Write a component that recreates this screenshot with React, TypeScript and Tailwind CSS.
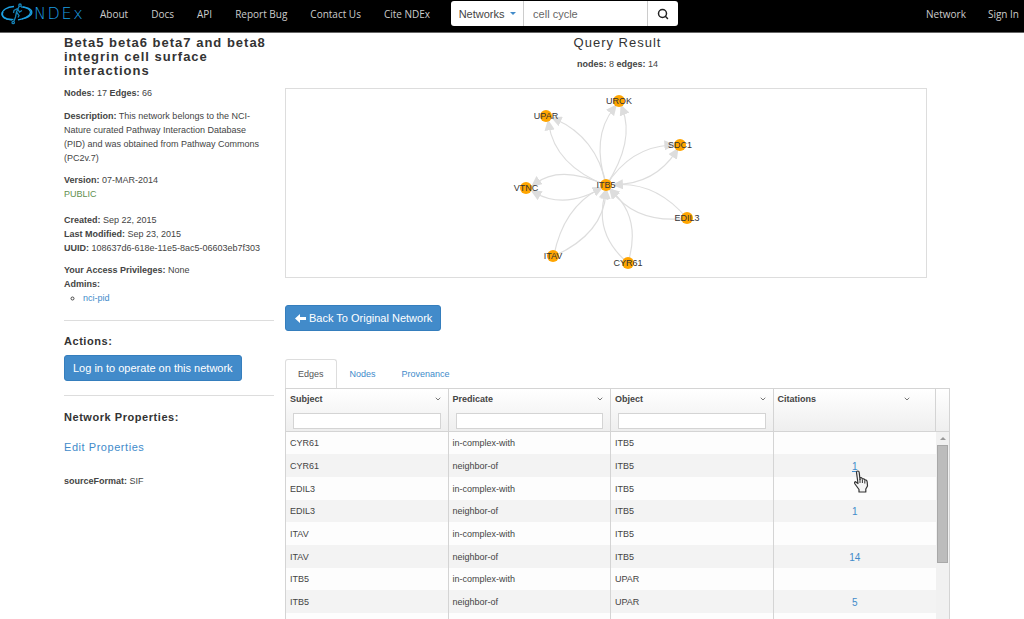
import { useState } from "react";
import { Search, ChevronDown } from "lucide-react";

const navLinks = ["About", "Docs", "API", "Report Bug", "Contact Us", "Cite NDEx"];

const rows = [
  { subject: "CYR61", predicate: "in-complex-with", object: "ITB5", citations: "" },
  { subject: "CYR61", predicate: "neighbor-of", object: "ITB5", citations: "1" },
  { subject: "EDIL3", predicate: "in-complex-with", object: "ITB5", citations: "" },
  { subject: "EDIL3", predicate: "neighbor-of", object: "ITB5", citations: "1" },
  { subject: "ITAV", predicate: "in-complex-with", object: "ITB5", citations: "" },
  { subject: "ITAV", predicate: "neighbor-of", object: "ITB5", citations: "14" },
  { subject: "ITB5", predicate: "in-complex-with", object: "UPAR", citations: "" },
  { subject: "ITB5", predicate: "neighbor-of", object: "UPAR", citations: "5" },
  { subject: "", predicate: "", object: "", citations: "" },
];

const nodes = [
  { name: "UROK", x: 333, y: 12 },
  { name: "UPAR", x: 260, y: 27 },
  { name: "SDC1", x: 394, y: 56 },
  { name: "ITB5", x: 320, y: 96 },
  { name: "VTNC", x: 240, y: 99 },
  { name: "EDIL3", x: 401, y: 129 },
  { name: "ITAV", x: 267, y: 167 },
  { name: "CYR61", x: 342, y: 174 },
];

const edges = [
  "M319 304 Q290 160 165 105",
  "M319 304 Q165 245 146 120",
  "M319 304 Q272 160 342 72",
  "M319 304 Q405 170 367 74",
  "M319 304 Q390 190 512 183",
  "M345 302 Q465 300 528 203",
  "M561 403 Q470 295 350 302",
  "M561 403 Q410 420 336 322",
  "M384 537 Q425 400 336 322",
  "M384 537 Q280 450 316 326",
  "M161 517 Q190 370 298 315",
  "M161 517 Q310 450 318 326",
  "M319 304 Q180 240 104 300",
  "M319 304 Q200 380 104 326",
];

function Logo() {
  return (
    <a href="#" aria-label="NDEx home" className="flex h-full w-[85px] shrink-0 items-center text-[#1c9fe0]">
      <svg viewBox="0 0 34 22" className="h-[22px] w-[34px] shrink-0" fill="none" stroke="#1c9fe0">
        <path d="M14 3.500C7 4 1.800 7.200 2 11.200 2.300 15 7 17 13.500 16.500" strokeWidth="1.300" />
        <path d="M3 8.500C.5 13 5 16.800 12 16.600" strokeWidth="1.600" />
        <path d="M21 3.800c6 .2 10.800 2.400 10.800 5.400 0 3.600-6.300 6.300-13.800 7.600" strokeWidth="1.300" />
        <path d="M23 4c5 .8 8 3 7.400 5.800-.7 2.700-4.400 4.800-8.400 6" strokeWidth="1.300" />
        <g stroke="#1583b8" strokeWidth="1.300">
          <circle cx="20" cy="2.200" r="1.200" />
          <path d="M19 3.500 16.500 9l2.500 3.500-1 2M16.500 9l-1 5-1.500 4M17.500 5.500 14 7.500l-.5 2.500M18 6.500l1.500 2.500 2.500-1.500" />
          <circle cx="13.200" cy="19.500" r="1.200" />
        </g>
      </svg>
      <span className="font-['DejaVu_Sans'] text-[16px] font-extralight leading-4 tracking-widest">NDEx</span>
    </a>
  );
}

function HandCursor() {
  return (
    <svg viewBox="0 0 16 24" className="pointer-events-none absolute left-1/2 top-4 z-10 -ml-px h-6 w-4" aria-hidden="true">
      <path
        d="M2.500 2.500Q2.500 1 3.800 1T5.200 2.500L6 9.500V8Q7.800 7 8.300 9 10 8.200 10.700 10 12.800 9.500 13.200 12L13.500 16 11.800 19V22H5V19.500L1 14Q0 12 1.500 11.700L4 13.500Z"
        fill="#f4f4f4"
        stroke="#333"
        strokeWidth="1.200"
        strokeLinejoin="round"
      />
      <path d="M6 9v4M8.400 9.500V13M10.800 10.500V13.500" stroke="#333" strokeWidth="1" />
    </svg>
  );
}

function NetworkGraph() {
  return (
    <svg viewBox="0 0 640 188" className="block h-[188px] w-full" role="img" aria-label="Query result network">
      <defs>
        <marker id="arrow" viewBox="0 0 28 26" refX="16" refY="13" markerWidth="33" markerHeight="31" markerUnits="userSpaceOnUse" orient="auto">
          <path d="M0 0 28 13 0 26Z" fill="#ddd" />
        </marker>
      </defs>
      <g transform="translate(214 -5) scale(.3333)" fill="none" stroke="#ddd" strokeWidth="3.500">
        {edges.map((d) => (
          <path key={d} d={d} markerEnd="url(#arrow)" />
        ))}
      </g>
      {nodes.map((n) => (
        <g key={n.name}>
          <circle cx={n.x} cy={n.y} r="6" fill="#ffa500" />
          <text x={n.x} y={n.y + 3} textAnchor="middle" className="fill-[#333] text-[9px]">
            {n.name}
          </text>
        </g>
      ))}
    </svg>
  );
}

function HeaderCell({ label, filter = true }: { label: string; filter?: boolean }) {
  return (
    <th scope="col" className="border-r border-[#d4d4d4] p-0 align-top font-bold">
      <div className={filter ? "flex h-5 items-center justify-between pl-1 pr-[6px]" : "flex h-5 items-center justify-between pl-1 pr-6"}>
        <span>{label}</span>
        <ChevronDown className="size-2 text-[#777]" strokeWidth={3} />
      </div>
      {filter && (
        <div className="px-[7px] pt-1">
          <input aria-label={`Filter ${label}`} className="block h-4 w-full border border-[#d4d4d4] bg-white px-1 font-normal" />
        </div>
      )}
    </th>
  );
}

function EdgeTable() {
  return (
    <table className="w-full table-fixed border-separate border-spacing-0 border-l border-t border-[#d4d4d4] text-left">
      <colgroup>
        <col />
        <col />
        <col />
        <col />
        <col className="w-[14px]" />
      </colgroup>
      <thead>
        <tr className="h-[43px] bg-linear-to-b from-white to-[#eee] *:border-b">
          <HeaderCell label="Subject" />
          <HeaderCell label="Predicate" />
          <HeaderCell label="Object" />
          <HeaderCell label="Citations" filter={false} />
          <td className="border-r border-[#d4d4d4]" />
        </tr>
      </thead>
      <tbody>
        {rows.map((row, i) => (
          <tr key={i} className="h-[23px] bg-[#fdfdfd] even:bg-[#f3f3f3] nth-1:h-[22px] nth-4:h-[22px] nth-7:h-[22px]">
            <td className="border-r border-[#d4d4d4] py-0 pl-1">{row.subject}</td>
            <td className="border-r border-[#d4d4d4] py-0 pl-1">{row.predicate}</td>
            <td className="border-r border-[#d4d4d4] py-0 pl-1">{row.object}</td>
            <td className="relative p-0 pt-[2px] text-center text-[10px] leading-3">
              {row.citations && (
                <a href="#" className={i === 1 ? "text-[#428bca] underline" : "text-[#428bca]"}>
                  {row.citations}
                </a>
              )}
              {i === 1 && <HandCursor />}
            </td>
            {i === 0 && (
              <td rowSpan={rows.length} className="border-r border-[#d4d4d4] bg-[#f1f1f1] p-0 align-top">
                <div className="flex h-[13px] items-center justify-center">
                  <svg viewBox="0 0 6 3" className="h-[3px] w-[6px]">
                    <path d="M0 3 3 0 6 3Z" fill="#999" />
                  </svg>
                </div>
                <div className="mx-px h-[118px] border border-[#a8a8a8] bg-[#bcbcbc]" />
              </td>
            )}
          </tr>
        ))}
      </tbody>
    </table>
  );
}

export default function App() {
  const [tab, setTab] = useState("Edges");
  return (
    <div className="flex h-screen flex-col overflow-hidden bg-white font-['Liberation_Sans',Arial,sans-serif] text-[9px] leading-[14px] text-[#444]">
      <header className="flex h-[33px] shrink-0 items-start border-b border-[#666] bg-black font-['Open_Sans',sans-serif] text-[10px] text-[#ccc]">
        <div className="flex h-[27px] items-center">
          <Logo />
          <nav className="ml-[15px] flex gap-[23px] whitespace-nowrap">
            {navLinks.map((l) => (
              <a key={l} href="#">
                {l}
              </a>
            ))}
          </nav>
        </div>
        <form className="ml-[21px] mt-px flex h-[25px] w-[227px] overflow-hidden rounded-[3px] bg-white font-['Liberation_Sans',Arial,sans-serif] text-[11px] text-[#444]">
          <button type="button" className="flex w-[73px] shrink-0 items-center justify-center gap-[5px] border-r border-[#ccc]">
            Networks
            <svg viewBox="0 0 6 3" className="h-[3px] w-[6px]">
              <path d="M0 0h6L3 3Z" fill="#428bca" />
            </svg>
          </button>
          <input aria-label="Search networks" defaultValue="cell cycle" className="min-w-0 flex-1 px-[9px] text-[#666]" />
          <button type="button" aria-label="Search" className="flex w-[31px] shrink-0 items-center justify-center border-l border-[#ccc]">
            <Search className="size-3 text-[#222]" strokeWidth={3} />
          </button>
        </form>
        <nav className="ml-auto flex h-[27px] items-center gap-[22px] whitespace-nowrap pr-[5px]">
          <a href="#">Network</a>
          <a href="#">Sign In</a>
        </nav>
      </header>

      <div className="flex min-h-0 flex-1 gap-[11px] pl-16 pr-[74px]">
        <aside className="w-[210px] shrink-0 pt-[3px]">
          <h1 className="text-[13px] font-bold leading-[14px] tracking-[1px] text-[#333]">
            Beta5 beta6 beta7 and beta8 integrin cell surface interactions
          </h1>
          <p className="mt-2">
            <b>Nodes:</b> 17 <b>Edges:</b> 66
          </p>
          <p className="mt-[9px] pr-2">
            <b>Description:</b> This network belongs to the NCI-
            <br />
            Nature curated Pathway Interaction Database (PID) and was obtained from Pathway Commons (PC2v.7)
          </p>
          <p className="mt-2">
            <b>Version:</b> 07-MAR-2014
          </p>
          <p className="text-[#5f8f4f]">PUBLIC</p>
          <div className="mt-3">
            <p>
              <b>Created:</b> Sep 22, 2015
            </p>
            <p>
              <b>Last Modified:</b> Sep 23, 2015
            </p>
            <p className="whitespace-nowrap">
              <b>UUID:</b> 108637d6-618e-11e5-8ac5-06603eb7f303
            </p>
          </div>
          <div className="mt-2">
            <p>
              <b>Your Access Privileges:</b> None
            </p>
            <p>
              <b>Admins:</b>
            </p>
            <ul className="list-[circle] pl-[19px]">
              <li>
                <a href="#" className="text-[#428bca]">
                  nci-pid
                </a>
              </li>
            </ul>
          </div>
          <hr className="mt-[15px] border-[#ddd]" />
          <h2 className="mt-[13px] text-[11px] font-bold tracking-wider text-[#333]">Actions:</h2>
          <button type="button" className="mt-[7px] flex h-[26px] items-center whitespace-nowrap rounded-[3px] border border-[#357ebd] bg-[#428bca] px-2 text-[11px] text-white">
            Log in to operate on this network
          </button>
          <hr className="mt-[14px] border-[#ddd]" />
          <h2 className="mt-[14px] text-[11px] font-bold tracking-wider text-[#333]">Network Properties:</h2>
          <a href="#" className="mt-4 block text-[11px] tracking-wider text-[#428bca]">
            Edit Properties
          </a>
          <p className="mt-5">
            <b>sourceFormat:</b> SIF
          </p>
        </aside>

        <main className="flex min-w-0 flex-1 flex-col pt-[3px]">
          <h2 className="text-center text-[13px] leading-[14px] tracking-[1px] text-[#333]">Query Result</h2>
          <p className="mt-[7px] text-center">
            <b>nodes:</b> 8 <b>edges:</b> 14
          </p>
          <div className="mr-[23px] mt-[17px] shrink-0 border border-[#ddd]">
            <NetworkGraph />
          </div>
          <button type="button" className="mt-[27px] flex h-[26px] shrink-0 items-center gap-[3px] self-start rounded-[3px] border border-[#357ebd] bg-[#428bca] pl-[9px] pr-2 text-[11px] text-white">
            <svg viewBox="0 0 11 9" className="h-[9px] w-[11px]">
              <path d="M0 4.500 5 0v3h6v3H5v3Z" fill="#fff" />
            </svg>
            Back To Original Network
          </button>
          <div role="tablist" className="mt-[28px] flex h-[29px] shrink-0">
            {["Edges", "Nodes", "Provenance"].map((t) => (
              <button
                key={t}
                type="button"
                role="tab"
                aria-selected={tab === t}
                onClick={() => setTab(t)}
                className={
                  tab === t
                    ? "rounded-t-[3px] border border-b-0 border-[#ddd] px-3 text-[#555]"
                    : "border border-b-0 border-transparent px-3 text-[#428bca]"
                }
              >
                {t}
              </button>
            ))}
          </div>
          <div className="min-h-0 flex-1 overflow-hidden">
            <EdgeTable />
          </div>
        </main>
      </div>
    </div>
  );
}
